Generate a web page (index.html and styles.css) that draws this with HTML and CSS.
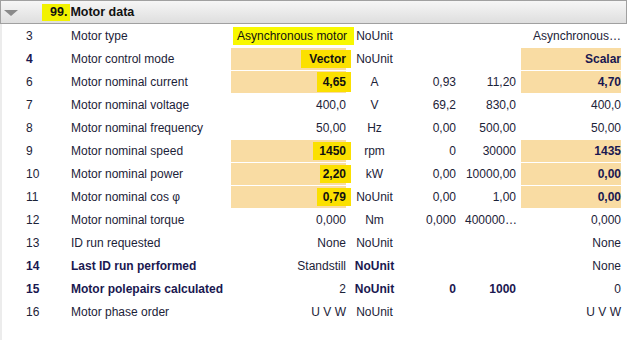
FILE: index.html
```
<!DOCTYPE html>
<html>
<head>
<meta charset="utf-8">
<link rel="stylesheet" href="styles.css">
</head>
<body>
<div class="panel">
  <div class="header">
    <span class="tri"></span>
    <span class="hnum">99.</span>
    <span class="htitle">Motor data</span>
  </div>
  <div class="rows">
    <div class="row">
      <div class="num">3</div><div class="name">Motor type</div>
      <div class="val left"><span class="hl hl-async">Asynchronous motor</span></div>
      <div class="unit">NoUnit</div><div class="min"></div><div class="max"></div>
      <div class="def">Asynchronous…</div>
    </div>
    <div class="row">
      <div class="num b">4</div><div class="name">Motor control mode</div>
      <div class="val or b"><span class="hl2 hl-vector">Vector</span></div>
      <div class="unit">NoUnit</div><div class="min"></div><div class="max"></div>
      <div class="def or b">Scalar</div>
    </div>
    <div class="row">
      <div class="num">6</div><div class="name">Motor nominal current</div>
      <div class="val or b"><span class="hl2 hl-465">4,65</span></div>
      <div class="unit">A</div><div class="min">0,93</div><div class="max">11,20</div>
      <div class="def or b">4,70</div>
    </div>
    <div class="row">
      <div class="num">7</div><div class="name">Motor nominal voltage</div>
      <div class="val">400,0</div>
      <div class="unit">V</div><div class="min">69,2</div><div class="max">830,0</div>
      <div class="def">400,0</div>
    </div>
    <div class="row">
      <div class="num">8</div><div class="name">Motor nominal frequency</div>
      <div class="val">50,00</div>
      <div class="unit">Hz</div><div class="min">0,00</div><div class="max">500,00</div>
      <div class="def">50,00</div>
    </div>
    <div class="row">
      <div class="num">9</div><div class="name">Motor nominal speed</div>
      <div class="val or b"><span class="hl2 hl-1450">1450</span></div>
      <div class="unit">rpm</div><div class="min">0</div><div class="max">30000</div>
      <div class="def or b">1435</div>
    </div>
    <div class="row">
      <div class="num">10</div><div class="name">Motor nominal power</div>
      <div class="val or b"><span class="hl2 hl-220">2,20</span></div>
      <div class="unit">kW</div><div class="min">0,00</div><div class="max">10000,00</div>
      <div class="def or b">0,00</div>
    </div>
    <div class="row">
      <div class="num">11</div><div class="name">Motor nominal cos φ</div>
      <div class="val or b"><span class="hl2 hl-079">0,79</span></div>
      <div class="unit">NoUnit</div><div class="min">0,00</div><div class="max">1,00</div>
      <div class="def or b">0,00</div>
    </div>
    <div class="row">
      <div class="num">12</div><div class="name">Motor nominal torque</div>
      <div class="val">0,000</div>
      <div class="unit">Nm</div><div class="min">0,000</div><div class="max left">400000…</div>
      <div class="def">0,000</div>
    </div>
    <div class="row">
      <div class="num">13</div><div class="name">ID run requested</div>
      <div class="val">None</div>
      <div class="unit">NoUnit</div><div class="min"></div><div class="max"></div>
      <div class="def">None</div>
    </div>
    <div class="row">
      <div class="num b">14</div><div class="name b">Last ID run performed</div>
      <div class="val">Standstill</div>
      <div class="unit b">NoUnit</div><div class="min"></div><div class="max"></div>
      <div class="def">None</div>
    </div>
    <div class="row">
      <div class="num b">15</div><div class="name b">Motor polepairs calculated</div>
      <div class="val">2</div>
      <div class="unit b">NoUnit</div><div class="min b">0</div><div class="max b">1000</div>
      <div class="def">0</div>
    </div>
    <div class="row">
      <div class="num">16</div><div class="name">Motor phase order</div>
      <div class="val">U V W</div>
      <div class="unit">NoUnit</div><div class="min"></div><div class="max"></div>
      <div class="def">U V W</div>
    </div>
  </div>
</div>
</body>
</html>
```
FILE: styles.css
```
html, body {
  margin: 0;
  padding: 0;
  background: #ffffff;
}
body {
  font-family: "Liberation Sans", Arial, sans-serif;
  font-size: 12px;
  color: #1c2238;
  width: 629px;
  height: 340px;
  overflow: hidden;
}
.panel {
  width: 627px;
}
.header {
  box-sizing: border-box;
  height: 24px;
  width: 627px;
  border: 1px solid #a0a0a0;
  background: linear-gradient(#f6f6f6, #dedede);
  display: flex;
  align-items: center;
  gap: 4px;
  font-size: 12.5px;
}
.tri {
  width: 0;
  height: 0;
  border-left: 7px solid transparent;
  border-right: 7px solid transparent;
  border-top: 6px solid #8a8a8a;
  margin-left: 3px;
  margin-top: 1px;
}
.hnum {
  margin-left: 20px;
  background: #f2f200;
  padding: 2px 3px 2px 8px;
  font-weight: bold;
  color: #111;
  line-height: 13px;
}
.htitle {
  font-weight: bold;
  color: #111;
  margin-left: -4px;
}
.rows {
  border-left: 2px solid #ececec;
  height: 316px;
  padding-top: 1px;
  box-sizing: border-box;
}
.row {
  display: grid;
  grid-template-columns: 69px 160px 120px 47px 62px 61px 105px;
  height: 23px;
  line-height: 23px;
  white-space: nowrap;
}
.row > div {
  overflow: hidden;
}
.num {
  padding-left: 24px;
}
.row > .name {
  overflow: visible;
}
.val {
  text-align: right;
  padding-right: 5px;
}
.row > .val.left {
  text-align: left;
  padding: 0 0 0 2px;
  overflow: visible;
}
.unit {
  text-align: center;
}
.min {
  text-align: right;
  padding-right: 4px;
}
.max {
  text-align: right;
  padding-right: 5px;
}
.max.left {
  text-align: left;
  padding-left: 5px;
}
.def {
  text-align: right;
  padding-right: 5px;
}
.or {
  background: #f9dca3;
  background-clip: content-box;
  box-sizing: border-box;
  padding-bottom: 1px;
  line-height: 22px;
}
.b {
  font-weight: bold;
  color: #1a1850;
}
.hl {
  display: inline-block;
  background: #f8f800;
  line-height: 18px;
  padding: 0 7px 0 4px;
  color: #111;
}
.hl2 {
  display: inline-block;
  background: #fbe000;
  line-height: 18px;
  color: #111;
  margin-right: -5px;
  padding-right: 5px;
}
.hl-vector { padding-left: 8px; }
.hl-465 { padding-left: 6px; line-height: 20px; }
.hl-1450 { padding-left: 6px; }
.hl-220 { padding-left: 3px; }
.hl-079 { padding-left: 6px; }
```
